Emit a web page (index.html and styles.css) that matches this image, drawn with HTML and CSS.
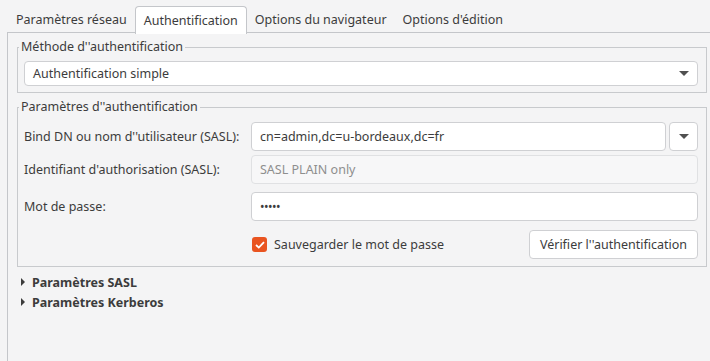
FILE: index.html
```html
<!DOCTYPE html>
<html lang="fr">
<head>
  <meta charset="UTF-8" />
  <title>Authentification</title>
  <link rel="stylesheet" href="styles.css">
</head>
<body>

  <div class="tabs">
    <span class="tab">Paramètres réseau</span>
    <span class="tab active">Authentification</span>
    <span class="tab">Options du navigateur</span>
    <span class="tab">Options d'édition</span>
  </div>

  <div class="panel">
    <fieldset class="frame">
      <legend>Méthode d''authentification</legend>
      <div class="combo">
        <span>Authentification simple</span>
        <span class="arrow"></span>
      </div>
    </fieldset>

    <fieldset class="frame auth">
      <legend>Paramètres d''authentification</legend>

      <div class="row first">
        <label>Bind DN ou nom d''utilisateur (SASL):</label>
        <div class="entry-combo">
          <div class="entry">cn=admin,dc=u-bordeaux,dc=fr</div>
          <div class="drop"><span class="arrow"></span></div>
        </div>
      </div>

      <div class="row second">
        <label>Identifiant d'authorisation (SASL):</label>
        <div class="entry disabled">SASL PLAIN only</div>
      </div>

      <div class="row third">
        <label>Mot de passe:</label>
        <div class="entry dots">•••••</div>
      </div>

      <div class="row actions">
        <span></span>
        <div class="actions-inner">
          <label class="check">
            <span class="box">
              <svg width="10" height="8" viewBox="0 0 10 8"><path d="M1 4 L3.8 6.6 L9 1.2" fill="none" stroke="#fff" stroke-width="1.8" /></svg>
            </span>
            Sauvegarder le mot de passe
          </label>
          <button class="btn">Vérifier l''authentification</button>
        </div>
      </div>
    </fieldset>

    <!-- expanders -->
    <div class="expander first-exp"><span class="tri"></span>Paramètres SASL</div>
    <div class="expander"><span class="tri"></span>Paramètres Kerberos</div>
  </div>

</body>
</html>
```

FILE: styles.css
```css
body {
  font-family: 'Noto Sans', sans-serif;
  font-size: 12.5px;
  background: #f4f4f5;
  color: #3c3c3c;
  margin: 0;
  padding: 0;
  height: 361px;
  overflow: hidden;
}

.tabs {
  display: flex;
  padding: 6px 0 0 8px;
  height: 26px;
}

.tab {
  display: flex;
  align-items: center;
  padding: 0 7px;
  height: 26px;
  border: 1px solid transparent;
  border-bottom: none;
  line-height: 16px;
}

.tab.active {
  background: #fff;
  border-color: #c4c6ca;
  border-radius: 4px 4px 0 0;
  height: 27px;
  padding: 0 8px;
  position: relative;
  z-index: 1;
}

.panel {
  margin-left: 7px;
  border-top: 1px solid #c4c6ca;
  border-left: 1px solid #c4c6ca;
  padding: 6px 3px 0 9px;
  height: 330px;
}

.frame {
  margin: 0;
  border: 1px solid #c8cacd;
  padding: 6px 8px 6px 6px;
  line-height: 16px;
}

.frame legend {
  padding: 0 2px;
  margin-left: -5px;
}

.frame.auth {
  margin-top: 6px;
  padding-top: 7px;
  padding-bottom: 7px;
}

.combo {
  display: flex;
  justify-content: space-between;
  align-items: center;
  height: 23px;
  background: #fff;
  border: 1px solid #cfd0d3;
  border-radius: 4px;
  padding: 0 8px 0 8px;
}

.arrow {
  width: 0;
  height: 0;
  border-left: 5px solid transparent;
  border-right: 5px solid transparent;
  border-top: 5px solid #505050;
}

.row {
  display: grid;
  grid-template-columns: 227px 1fr;
  align-items: center;
}

.second { margin-top: 4px; }
.third { margin-top: 8px; }
.actions { margin-top: 9px; }

.entry-combo {
  display: flex;
  gap: 3px;
}

.entry {
  flex: 1;
  height: 27px;
  line-height: 27px;
  background: #fff;
  border: 1px solid #cfd0d3;
  border-radius: 4px;
  padding: 0 8px;
}

.entry.disabled {
  background: #f7f7f8;
  border-color: #e0e1e3;
  color: #8e8e8e;
}

.entry.dots {
  font-size: 12px;
  letter-spacing: -0.5px;
}

.drop {
  width: 27px;
  height: 27px;
  background: #fff;
  border: 1px solid #cfd0d3;
  border-radius: 4px;
  display: flex;
  align-items: center;
  justify-content: center;
}

.actions-inner {
  display: flex;
  justify-content: space-between;
  align-items: center;
}

.check {
  display: flex;
  align-items: center;
  gap: 7px;
  padding-left: 1px;
}

.box {
  width: 15px;
  height: 15px;
  background: #e95420;
  border-radius: 3px;
  display: flex;
  align-items: center;
  justify-content: center;
}

.btn {
  font-family: inherit;
  font-size: 12.5px;
  color: #3c3c3c;
  background: #fff;
  border: 1px solid #cfd0d3;
  border-radius: 4px;
  height: 29px;
  padding: 0 10px;
}

.expander {
  display: flex;
  align-items: center;
  font-weight: 700;
  height: 20px;
  padding-left: 4px;
}

.first-exp {
  margin-top: 5px;
}

.tri {
  width: 0;
  height: 0;
  border-top: 4px solid transparent;
  border-bottom: 4px solid transparent;
  border-left: 4px solid #3c3c3c;
  margin-right: 7px;
}
```
